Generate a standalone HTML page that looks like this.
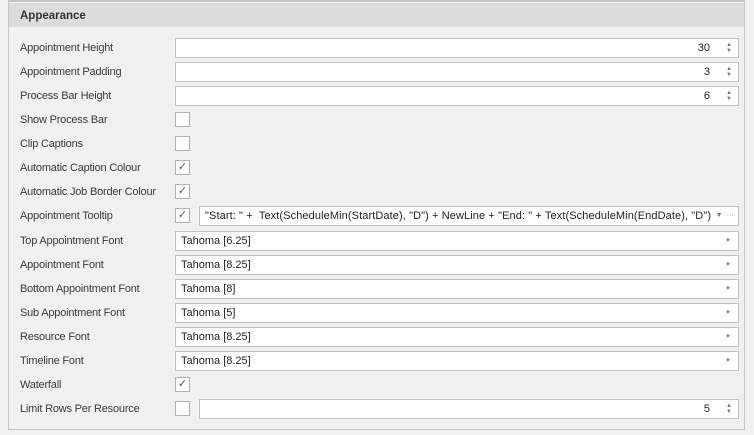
<!DOCTYPE html>
<html><head><style>
body{margin:0;width:754px;height:435px;background:#f0f0f0;font-family:Tahoma,"Liberation Sans",sans-serif;font-size:11px;color:#3a3a3a;position:relative;overflow:hidden}
.panel{position:absolute;left:8px;top:0;width:737px;height:430px;border:1px solid #c6c6c6;border-top:2px solid #c6c6c6;box-sizing:border-box}
.hdr{position:absolute;left:9px;top:3px;width:735px;height:24px;background:#dcdcdc;font-weight:bold;font-size:11.5px;line-height:26px;padding-left:11px;box-sizing:border-box;color:#333}
.lbl{position:absolute;left:20px;font-size:11px;letter-spacing:-0.2px}
.inp{position:absolute;height:20px;background:#fff;border:1px solid #c2c2c2;box-sizing:border-box;line-height:18px;padding-left:5px;font-size:11px;color:#222;white-space:nowrap;overflow:hidden}
.cb{position:absolute;left:175px;width:15px;height:15px;background:#fff;border:1px solid #b0b0b0;box-sizing:border-box;font-size:11px;line-height:13px;text-align:center;color:#555}
.num{position:absolute;right:28px;top:0}
.spin{position:absolute;right:6px;top:3px;font-size:6px;line-height:6px;color:#777}
.dd{position:absolute;right:7px;top:0;font-size:6px;color:#777}
</style></head><body>
<div class="panel"></div>
<div class="hdr">Appearance</div>

<div class="lbl" style="top:42px">Appointment Height</div>
<div class="inp" style="left:175px;top:38px;width:564px"><span class="num">30</span><span class="spin">▲<br>▼</span></div>
<div class="lbl" style="top:66px">Appointment Padding</div>
<div class="inp" style="left:175px;top:62px;width:564px"><span class="num">3</span><span class="spin">▲<br>▼</span></div>
<div class="lbl" style="top:90px">Process Bar Height</div>
<div class="inp" style="left:175px;top:86px;width:564px"><span class="num">6</span><span class="spin">▲<br>▼</span></div>
<div class="lbl" style="top:114px">Show Process Bar</div>
<div class="cb" style="top:112px"></div>
<div class="lbl" style="top:138px">Clip Captions</div>
<div class="cb" style="top:136px"></div>
<div class="lbl" style="top:162px">Automatic Caption Colour</div>
<div class="cb" style="top:160px">✓</div>
<div class="lbl" style="top:186px">Automatic Job Border Colour</div>
<div class="cb" style="top:184px">✓</div>
<div class="lbl" style="top:210px">Appointment Tooltip</div>
<div class="cb" style="top:208px">✓</div>
<div class="inp" style="left:199px;top:206px;width:540px;letter-spacing:0.1px">"Start: " +&nbsp; Text(ScheduleMin(StartDate), "D") + NewLine + "End: " + Text(ScheduleMin(EndDate), "D")<span class="dd" style="right:4px;background:#fff;padding-left:4px;font-size:7px">▼ &nbsp;···</span></div>
<div class="lbl" style="top:235px">Top Appointment Font</div>
<div class="inp" style="left:175px;top:231px;width:564px">Tahoma [6.25]<span class="dd">▼</span></div>
<div class="lbl" style="top:259px">Appointment Font</div>
<div class="inp" style="left:175px;top:255px;width:564px">Tahoma [8.25]<span class="dd">▼</span></div>
<div class="lbl" style="top:283px">Bottom Appointment Font</div>
<div class="inp" style="left:175px;top:279px;width:564px">Tahoma [8]<span class="dd">▼</span></div>
<div class="lbl" style="top:307px">Sub Appointment Font</div>
<div class="inp" style="left:175px;top:303px;width:564px">Tahoma [5]<span class="dd">▼</span></div>
<div class="lbl" style="top:331px">Resource Font</div>
<div class="inp" style="left:175px;top:327px;width:564px">Tahoma [8.25]<span class="dd">▼</span></div>
<div class="lbl" style="top:355px">Timeline Font</div>
<div class="inp" style="left:175px;top:351px;width:564px">Tahoma [8.25]<span class="dd">▼</span></div>
<div class="lbl" style="top:379px">Waterfall</div>
<div class="cb" style="top:377px">✓</div>
<div class="lbl" style="top:403px">Limit Rows Per Resource</div>
<div class="cb" style="top:401px"></div>
<div class="inp" style="left:199px;top:399px;width:540px"><span class="num">5</span><span class="spin">▲<br>▼</span></div>
</body></html>
